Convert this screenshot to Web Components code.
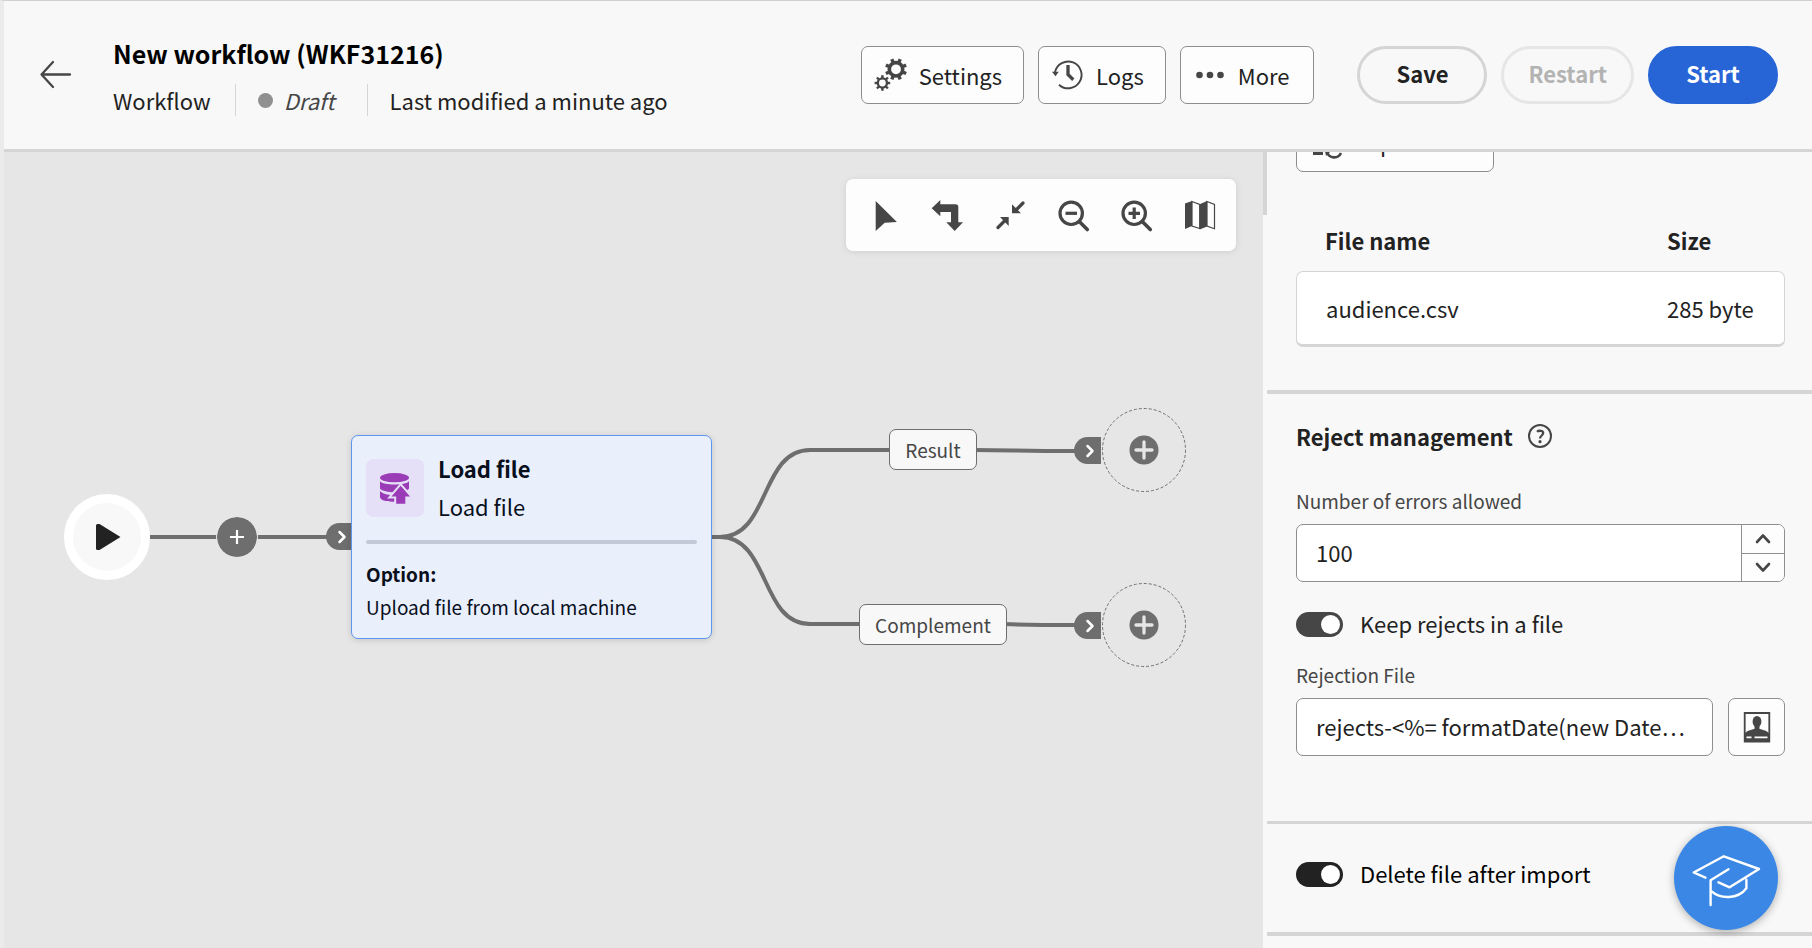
<!DOCTYPE html>
<html lang="en">
<head>
<meta charset="utf-8">
<title>New workflow</title>
<style>
  html, body { height: 100%; }
  body { margin: 0; font-family: "Noto Sans CJK SC", "Noto Sans", sans-serif; font-size: 22px; line-height: 28px; color: #222; background: #f8f8f8; }
</style>
</head>
<body>
<workflow-page></workflow-page>

<script>
const gear = (cx, cy, ring, width, reach, tooth, offset) => {
  let teeth = '';
  for (let i = 0; i < 8; i++) {
    teeth += `<path d="M${cx} ${cy - ring}V${cy - reach}" stroke-width="${tooth}" transform="rotate(${offset + i * 45} ${cx} ${cy})"/>`;
  }
  return `<g fill="none" stroke="currentColor"><circle cx="${cx}" cy="${cy}" r="${ring}" stroke-width="${width}"/>${teeth}</g>`;
};

const ICONS = {
  back: [32, '<path d="M31 16.500H3M14 4 2.500 16.500 14 29" fill="none" stroke="currentColor" stroke-width="2.300" stroke-linecap="round" stroke-linejoin="round"/>'],
  settings: [32, gear(21, 10.3, 6.7, 3.6, 11, 3.4, 22.5) + gear(7.4, 24, 4.6, 2.4, 7.8, 2.4, 0)],
  logs: [32, '<path d="M3 13.300A13.400 13.400 0 1 1 7 25.700" fill="none" stroke="currentColor" stroke-width="1.900"/><path d="M0 12.700h6.800L3.500 17.300z"/><path d="M16 6v9.500l5.300 5.200" fill="none" stroke="currentColor" stroke-width="3.300"/>'],
  more: [32, '<circle cx="5.500" cy="16" r="3.300"/><circle cx="16" cy="16" r="3.300"/><circle cx="26.500" cy="16" r="3.300"/>'],
  cursor: [32, '<path d="M7.700 2 28.900 23l-12.200.700L7.700 32z"/>'],
  turn: [32, '<path d="M.700 9.200 9.300 1v4.300h15.200a2.800 2.800 0 0 1 2.800 2.800v15.200H32L23.700 32l-8.400-8.700H20V13H9.300v4.300z"/>'],
  collapse: [32, '<path d="M18 5.300v9h9zM6 18h8.700v9z"/><path d="m29 4-7 7M4 28.500l7-7" stroke="currentColor" stroke-width="3.200" stroke-linecap="round"/>'],
  zoomout: [32, '<g fill="none" stroke="currentColor" stroke-width="3.200"><circle cx="14.200" cy="14.300" r="11.200"/><path d="M8.500 14.300H20"/><path d="m22.500 22.700 7.800 7.800" stroke-width="3.600" stroke-linecap="round"/></g>'],
  zoomin: [32, '<g fill="none" stroke="currentColor" stroke-width="3.200"><circle cx="14.200" cy="14.300" r="11.200"/><path d="M8.500 14.300H20M14.200 8.600v11.500"/><path d="m22.500 22.700 7.800 7.800" stroke-width="3.600" stroke-linecap="round"/></g>'],
  map: [32, '<path d="M2 4.500 9 2v25l-7 3zM16.700 5.200 24 2v25.500l-7.300 3z"/><path d="m9 2.500 7.700 3V29.500L9 27zM24 2.500l7.500 3v24.200L24 27z" fill="none" stroke="currentColor" stroke-width="1.200"/>'],
  chevron: [16, '<path d="m5.500 3 5 5-5 5" fill="none" stroke="currentColor" stroke-width="2.500" stroke-linecap="round" stroke-linejoin="round"/>'],
  up: [16, '<path d="m2 11 6-6.500 6 6.500" fill="none" stroke="currentColor" stroke-width="2.600" stroke-linecap="round" stroke-linejoin="round"/>'],
  down: [16, '<path d="m2 5 6 6.500L14 5" fill="none" stroke="currentColor" stroke-width="2.600" stroke-linecap="round" stroke-linejoin="round"/>'],
  plus: [16, '<path d="M8 1v14M1 8h14" stroke="currentColor" stroke-width="2.200"/>'],
  pluscircle: [30, '<circle cx="15" cy="15" r="14.500"/><path d="M15 7v16M7 15h16" stroke="#e6e6e6" stroke-width="3.300" stroke-linecap="round"/>'],
  play: [26, '<path d="M0 1.500A1.500 1.500 0 0 1 1.500 0h2L24.500 13 3.500 26h-2A1.500 1.500 0 0 1 0 24.500z"/>'],
  upload: [32, '<ellipse cx="15.500" cy="5.700" rx="14.500" ry="4.600"/><path d="M1 9.300c3 4.400 26 4.400 29 0v7.200c-4 5-25 5-29 0zM1 19c4 4.500 13 4.500 20 3.300V29c-8 1.600-20 .5-20-4z"/><path d="m21.700 13.700 9.300 10.700h-4.700v7.300h-9.100v-7.300h-4.700z" stroke="#e6dff8" stroke-width="4"/><path d="m21.700 13.700 9.300 10.700h-4.700v7.300h-9.100v-7.300h-4.700z"/>'],
  help: [26, '<circle cx="13" cy="13" r="11" fill="none" stroke="currentColor" stroke-width="2"/><path d="M10 8.800c1.500-1.500 6.200-1.600 6.200 1.300 0 2.300-3.200 2.600-3.200 5.400" fill="none" stroke="currentColor" stroke-width="2.300"/><circle cx="13" cy="18.700" r="1.600"/>'],
  persona: [32, '<path d="M3.700 2h24.600v28.500H3.700z" fill="none" stroke="currentColor" stroke-width="1.800"/><ellipse cx="16" cy="10.500" rx="4.400" ry="5.500"/><path d="M13.500 14h5v4c4 1 8 1.800 9.500 4.500V30H4v-7.500C5.500 19.800 9.500 19 13.500 18z"/><path d="M5.500 26.300h5M13.500 26.300h13" stroke="#fff" stroke-width="1.800"/>'],
  cap: [104, '<path d="M31.500 51.700 19.700 46.500l30.100-16.200L85 43 55.600 61.300l-11.100-5M54.500 43.200 36.600 54.200V79M38 65.700c8 7.300 26 8 34.400-3.400v-8.600" fill="none" stroke="currentColor" stroke-width="2.400" stroke-linecap="round" stroke-linejoin="round"/>'],
  replace: [32, '<path d="M3 4h10v24H3z"/><path d="M17 25a7.500 7.500 0 0 0 14 1M30 19a7.500 7.500 0 0 0-13 1" fill="none" stroke="currentColor" stroke-width="2.600"/><path d="M15 24h6l-5 5z"/>'],
};

const define = (name, html, setup) => {
  const template = document.createElement('template');
  template.innerHTML = html;
  customElements.define(name, class extends HTMLElement {
    constructor() {
      super();
      this.attachShadow({ mode: 'open' }).append(template.content.cloneNode(true));
    }
    connectedCallback() { if (setup) setup(this, this.shadowRoot); }
  });
};

define('ui-icon', `<style>:host{display:inline-flex;flex:none} svg{display:block;fill:currentColor;overflow:visible}</style>`, (host, root) => {
  const icon = ICONS[host.getAttribute('name')];
  if (!icon) return;
  const [size, body] = icon;
  root.querySelector('svg')?.remove();
  root.append(document.createRange().createContextualFragment(
    `<svg width="${size}" height="${size}" viewBox="0 0 ${size} ${size}" aria-hidden="true">${body}</svg>`));
});

define('action-button', `
<style>
  :host { display: inline-flex; }
  button { display: flex; align-items: center; gap: 12px; height: 58px; padding: 0 21px 0 13px; box-sizing: border-box;
    border: 1px solid #8e8e8e; border-radius: 7px; background: #fdfdfd; color: #222; font: inherit; white-space: nowrap; cursor: pointer; }
  :host([icon="more"]) button { padding-right: 24px; }
  .icon { display: flex; color: #464646; }
  .text { padding-bottom: var(--text-rise, 0); }
</style>
<button type="button"><span class="icon"></span><span class="text"><slot></slot></span></button>`, (host, root) => {
  const icon = document.createElement('ui-icon');
  icon.setAttribute('name', host.getAttribute('icon'));
  root.querySelector('.icon').replaceChildren(icon);
});

define('pill-button', `
<style>
  :host { display: inline-flex; }
  button { height: 58px; min-width: 130px; padding: 0 24px 4px; box-sizing: border-box; border: 3px solid #d5d5d5; border-radius: 29px;
    background: transparent; color: #222; font: inherit; font-weight: 700; cursor: pointer; }
  button:disabled { border-color: #e6e6e6; color: #b3b3b3; }
  :host([accent]) button { background: #2765d6; border-color: #2765d6; color: #fff; }
</style>
<button type="button"><slot></slot></button>`, (host, root) => {
  root.querySelector('button').disabled = host.hasAttribute('disabled');
});

define('page-header', `
<style>
  :host { display: flex; align-items: center; height: 148px; padding: 0 34px 0 35px; border-bottom: 3px solid #d5d5d5; background: #f8f8f8; }
  .back { border: 0; background: none; padding: 0; margin-right: 42px; color: #464646; cursor: pointer; }
  .heading { flex: 1; min-width: 0; padding-top: 4px; }
  h1 { margin: 0; font-size: 25px; line-height: 30px; font-weight: 700; color: #000; white-space: nowrap; }
  .meta { display: flex; align-items: center; margin-top: 16px; height: 32px; white-space: nowrap; }
  .meta > span + span { border-left: 1px solid #d5d5d5; margin-left: 24px; padding-left: 22px; height: 32px; line-height: 32px; }
  .status { display: flex; align-items: center; gap: 11px; color: #464646; font-style: italic; padding-right: 8px; }
  .status::before { content: ""; width: 15px; height: 15px; border-radius: 50%; background: #909090; }
  .actions, .main { display: flex; gap: 14px; }
  .main { margin-left: 43px; }
</style>
<button class="back" type="button" aria-label="Back"><ui-icon name="back"></ui-icon></button>
<div class="heading">
  <h1>New workflow (WKF31216)</h1>
  <div class="meta"><span>Workflow</span><span class="status">Draft</span><span>Last modified a minute ago</span></div>
</div>
<div class="actions">
  <action-button icon="settings">Settings</action-button>
  <action-button icon="logs">Logs</action-button>
  <action-button icon="more">More</action-button>
</div>
<div class="main">
  <pill-button>Save</pill-button>
  <pill-button disabled>Restart</pill-button>
  <pill-button accent>Start</pill-button>
</div>`);

define('canvas-toolbar', `
<style>
  :host { display: flex; height: 72px; padding: 0 6px; border-radius: 7px; background: #fdfdfd; box-shadow: 0 1px 6px rgba(0,0,0,.1); }
  button { display: flex; align-items: center; justify-content: center; width: 63px; padding: 0; border: 0; background: none; color: #464646; cursor: pointer; }
</style>
<button type="button" aria-label="Select"><ui-icon name="cursor"></ui-icon></button>
<button type="button" aria-label="Change direction"><ui-icon name="turn"></ui-icon></button>
<button type="button" aria-label="Fit to screen"><ui-icon name="collapse"></ui-icon></button>
<button type="button" aria-label="Zoom out"><ui-icon name="zoomout"></ui-icon></button>
<button type="button" aria-label="Zoom in"><ui-icon name="zoomin"></ui-icon></button>
<button type="button" aria-label="Show map"><ui-icon name="map"></ui-icon></button>`);

define('activity-card', `
<style>
  :host { display: block; box-sizing: border-box; width: 361px; padding: 13px 14px 15px; border: 1px solid #5c96ee; border-radius: 7px;
    background: #e9f0fc; color: #0a0f1c; box-shadow: 0 1px 6px rgba(0,0,0,.15); }
  .top { display: flex; align-items: center; gap: 14px; padding-bottom: 13px; }
  .names { padding-bottom: 2px; }
  .badge { display: flex; align-items: center; justify-content: center; width: 58px; height: 58px; border-radius: 7px; background: #e6dff8; color: #9b3cb7; }
  .top p { margin: 0; line-height: 38px; }
  .top p:first-child { font-weight: 700; }
  hr { margin: 0; height: 4px; border: 0; border-radius: 2px; background: #c3c9d6; }
  .details { margin-top: 13px; font-size: 19px; line-height: 33px; }
</style>
<div class="top"><div class="badge"><ui-icon name="upload"></ui-icon></div><div class="names"><p><slot name="title"></slot></p><p><slot name="type"></slot></p></div></div>
<hr>
<div class="details"><slot></slot></div>`);

define('branch-label', `
<style>
  :host { display: block; box-sizing: border-box; height: 41px; border: 1px solid #6e6e6e; border-radius: 7px; background: #f8f8f8;
    color: #464646; font-size: 19px; line-height: 39px; text-align: center; }
</style><slot></slot>`);

define('input-port', `
<style>
  :host { display: flex; align-items: center; justify-content: flex-end; box-sizing: border-box; width: 27px; height: 27px; padding-right: 3px; border-radius: 14px 0 0 14px; background: #6e6e6e; color: #fff; }
</style><ui-icon name="chevron"></ui-icon>`);

define('drop-target', `
<style>
  :host { display: block; width: 84px; height: 84px; }
  button { display: flex; align-items: center; justify-content: center; position: relative; width: 100%; height: 100%; padding: 0; border: 0; background: none; color: #6e6e6e; cursor: pointer; }
  svg { position: absolute; inset: 0; }
</style>
<button type="button" aria-label="Add activity">
  <svg width="84" height="84" viewBox="0 0 84 84"><circle cx="42" cy="42" r="41.500" fill="none" stroke="#6e6e6e" stroke-dasharray="3 2"/></svg>
  <ui-icon name="pluscircle"></ui-icon>
</button>`);

/* Node positions are canvas coordinates of the diagram. */
define('workflow-canvas', `
<style>
  :host { display: block; position: relative; overflow: hidden; background: #e6e6e6; }
  canvas-toolbar { position: absolute; top: 27px; right: 27px; }
  .links { position: absolute; left: 0; top: 0; }
  .node { position: absolute; }
  .start { display: flex; align-items: center; justify-content: center; width: 86px; height: 86px; box-sizing: border-box; padding: 0 0 0 4px;
    border: 9px solid #fff; border-radius: 50%; background: #f8f8f8; color: #222; }
  .add { display: flex; align-items: center; justify-content: center; width: 40px; height: 40px; padding: 0; box-sizing: border-box; border: 0;
    border-radius: 50%; background: #6e6e6e; color: #fff; outline: 1px solid #e6e6e6; cursor: pointer; }
  b { display: block; }
</style>
<svg class="links" width="1200" height="600" fill="none" stroke="#6e6e6e" stroke-width="4">
  <path d="M146 385H330"/>
  <path d="M707 385H716C766 385 756 298 806 298H970C1010 298 1010 299 1074 299"/>
  <path d="M716 385C766 385 756 472 806 472H990C1010 472 1010 473 1074 473"/>
</svg>
<button class="node start" type="button" aria-label="Start" style="left:60px;top:342px"><ui-icon name="play"></ui-icon></button>
<button class="node add" type="button" aria-label="Insert activity" style="left:213px;top:365px"><ui-icon name="plus"></ui-icon></button>
<input-port class="node" style="left:322px;top:371px"></input-port>
<activity-card class="node" style="left:347px;top:283px"><span slot="title">Load file</span><span slot="type">Load file</span><b>Option:</b>Upload file from local machine</activity-card>
<branch-label class="node" style="left:885px;top:277px;width:88px">Result</branch-label>
<branch-label class="node" style="left:855px;top:452px;width:148px">Complement</branch-label>
<input-port class="node" style="left:1070px;top:285px"></input-port>
<input-port class="node" style="left:1070px;top:460px"></input-port>
<drop-target class="node" style="left:1098px;top:256px"></drop-target>
<drop-target class="node" style="left:1098px;top:431px"></drop-target>
<canvas-toolbar></canvas-toolbar>`);

define('file-table', `
<style>
  :host { display: block; }
  table { width: 100%; table-layout: fixed; border-collapse: separate; border-spacing: 0; text-align: left; }
  th { height: 42px; padding: 0 0 10px; font-weight: 700; }
  td { height: 72px; padding: 0; background: #fff; border: solid #d5d5d5; border-width: 1px 0 3px; }
  th:first-child, td:first-child { padding-left: 29px; }
  th:last-child { width: 118px; }
  td:first-child { border-left-width: 1px; border-radius: 7px 0 0 7px; }
  td:last-child { border-right-width: 1px; border-radius: 0 7px 7px 0; }
</style>
<table><thead><tr><th scope="col">File name</th><th scope="col">Size</th></tr></thead>
<tbody><tr><td>audience.csv</td><td>285 byte</td></tr></tbody></table>`);

define('number-field', `
<style>
  :host { display: block; }
  label { display: block; font-size: 19px; line-height: 28px; color: #464646; margin-bottom: 9px; }
  .box { display: flex; height: 58px; box-sizing: border-box; border: 1px solid #8e8e8e; border-radius: 7px; background: #fff; overflow: hidden; }
  input { flex: 1; min-width: 0; padding: 0 19px 3px; border: 0; outline: 0; background: none; color: #222; font: inherit; appearance: textfield; }
  input::-webkit-inner-spin-button { appearance: none; margin: 0; }
  .steps { display: flex; flex-direction: column; width: 42px; border-left: 1px solid #8e8e8e; }
  .steps button { flex: 1; display: flex; align-items: center; justify-content: center; padding: 0; border: 0; background: #fdfdfd; color: #464646; }
  .steps button + button { border-top: 1px solid #8e8e8e; }
</style>
<label for="value"></label>
<div class="box"><input id="value" type="number"><div class="steps">
  <button type="button" aria-label="Increase"><ui-icon name="up"></ui-icon></button>
  <button type="button" aria-label="Decrease"><ui-icon name="down"></ui-icon></button></div></div>`, (host, root) => {
  root.querySelector('label').textContent = host.getAttribute('label');
  const input = root.querySelector('input');
  input.value = host.getAttribute('value');
  const [up, down] = root.querySelectorAll('button');
  up.onclick = () => input.stepUp();
  down.onclick = () => input.stepDown();
});

define('expression-field', `
<style>
  :host { display: block; }
  label { display: block; font-size: 19px; line-height: 28px; color: #464646; margin-bottom: 9px; }
  .row { display: flex; gap: 15px; }
  input, button { height: 58px; box-sizing: border-box; border: 1px solid #8e8e8e; border-radius: 7px; font: inherit; color: #222; }
  input { flex: 1; min-width: 0; padding: 0 19px 3px; background: #fff; text-overflow: ellipsis; }
  button { display: flex; align-items: center; justify-content: center; width: 57px; padding: 0; background: #fdfdfd; color: #464646; cursor: pointer; }
</style>
<label for="value"></label>
<div class="row"><input id="value" type="text"><button type="button" aria-label="Personalize"><ui-icon name="persona"></ui-icon></button></div>`, (host, root) => {
  root.querySelector('label').textContent = host.getAttribute('label');
  root.querySelector('input').value = host.getAttribute('value');
});

define('toggle-switch', `
<style>
  :host { display: block; --track: #464646; }
  :host([strong]) { --track: #222; color: #000; }
  label { display: flex; align-items: center; gap: 17px; cursor: pointer; }
  span { padding-bottom: 3px; }
  input { appearance: none; flex: none; width: 47px; height: 25px; margin: 0; padding: 3px; box-sizing: border-box; border-radius: 13px; background: #b3b3b3; display: flex; }
  input::before { content: ""; width: 19px; height: 19px; border-radius: 50%; background: #fff; }
  input:checked { background: var(--track); justify-content: flex-end; }
</style>
<label><input type="checkbox" role="switch" checked><span><slot></slot></span></label>`);

define('settings-panel', `
<style>
  :host { display: block; position: relative; overflow: hidden; background: #f8f8f8; }
  .thumb { position: absolute; left: 0; top: 0; width: 4px; height: 63px; background: #d5d5d5; }
  .content { margin: -38px 0 0 4px; }
  section { padding: 0 27px 0 29px; border-bottom: 4px solid #d5d5d5; }
  .file { height: 276px; }
  .file action-button { --text-rise: 3px; }
  .file file-table { margin-top: 47px; }
  .rejects { height: 427px; border-bottom-width: 3px; }
  h2 { display: flex; align-items: center; gap: 14px; height: 28px; margin: 0; padding: 28px 0 37px; font-size: 22px; font-weight: 700; }
  h2 button { display: flex; padding: 0; border: 0; background: none; color: #464646; }
  .rejects number-field { padding-bottom: 27px; }
  .rejects toggle-switch { padding-bottom: 21px; }
  .after { display: flex; align-items: center; height: 101px; padding-bottom: 7px; }
</style>
<div class="thumb"></div>
<div class="content">
  <section class="file"><action-button icon="replace">Replace file</action-button><file-table></file-table></section>
  <section class="rejects">
    <h2>Reject management <button type="button" aria-label="Help"><ui-icon name="help"></ui-icon></button></h2>
    <number-field label="Number of errors allowed" value="100"></number-field>
    <toggle-switch>Keep rejects in a file</toggle-switch>
    <expression-field label="Rejection File" value="rejects-&lt;%= formatDate(new Date…"></expression-field>
  </section>
  <section class="after"><toggle-switch strong>Delete file after import</toggle-switch></section>
</div>`);

define('help-launcher', `
<style>
  :host { display: block; position: fixed; right: 34px; bottom: 18px; }
  button { display: flex; width: 104px; height: 104px; padding: 0; border: 0; border-radius: 50%; background: #3a87e6; color: #fff; box-shadow: 0 2px 8px rgba(0,0,0,.3); cursor: pointer; }
</style>
<button type="button" aria-label="Learn"><ui-icon name="cap"></ui-icon></button>`);

define('workflow-page', `
<style>
  :host { display: grid; grid-template: auto minmax(0, 1fr) / minmax(0, 1fr) 549px; height: 100vh; box-sizing: border-box; border-top: 1px solid #d0d0d0; border-left: 4px solid #ebebeb; }
  page-header { grid-column: 1 / -1; }
</style>
<page-header></page-header>
<workflow-canvas></workflow-canvas>
<settings-panel></settings-panel>
<help-launcher></help-launcher>`);
</script>
</body>
</html>
